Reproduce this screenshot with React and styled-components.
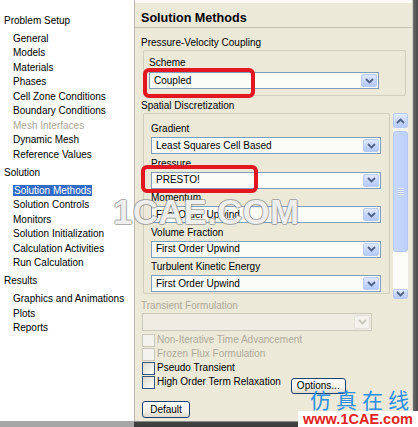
import React from 'react';
import styled, { createGlobalStyle } from 'styled-components';

const GlobalStyle = createGlobalStyle`
  html, body {
    margin: 0;
    padding: 0;
    background: #ffffff;
  }
  body {
    font-family: "Liberation Sans", Arial, sans-serif;
    font-size: 10px;
    color: #000;
  }
`;

const Window = styled.div`
  position: relative;
  width: 418px;
  height: 427px;
  display: flex;
  flex-direction: column;
  overflow: hidden;
  background: #ffffff;
`;

const Main = styled.div`
  display: flex;
  height: 421px;
`;

const Sidebar = styled.div`
  width: 134px;
  padding-top: 10px;
  border-right: 1px solid #b9b7ae;
  background: #ffffff;
  box-sizing: border-box;
  width: 135px;
`;

const TreeHeading = styled.div`
  line-height: 14.5px;
  margin: 3.5px 0;
  padding-left: 4px;
`;

const TreeItem = styled.div`
  line-height: 14.5px;
  padding-left: 13px;
  color: ${(p) => (p.$disabled ? '#aca899' : '#000')};
  white-space: nowrap;
`;

const Selected = styled.span`
  background: #316ac5;
  color: #ffffff;
  padding: 0 1px;
`;

const Panel = styled.div`
  flex: 1;
  background: #ece9d8;
  border-top: 3px solid #fbfaf6;
  padding-left: 6px;
  box-sizing: border-box;
`;

const EdgeShadow = styled.div`
  width: 6px;
  background: linear-gradient(to right, #d8d6cc 0, #d8d6cc 1px, #6a6a6a 1px, #4a4a4a 100%);
`;

const BottomBar = styled.div`
  height: 6px;
  background: linear-gradient(to bottom, #8a8a8a 0, #8a8a8a 1px, #454545 1px, #3a3a3a 100%);
  box-shadow: inset 134px 0 0 #a6a6a6;
`;

const Header = styled.div`
  height: 24px;
  box-sizing: border-box;
  margin-left: -6px;
  padding: 7px 0 0 6px;
  border-bottom: 1px solid #c5c2b2;
  font-size: 12.6px;
  font-weight: bold;
  line-height: 16px;
  height: 25px;
`;

const SectionTitle = styled.div`
  line-height: 14px;
  margin-top: ${(p) => p.$mt}px;
  color: ${(p) => (p.$disabled ? '#aca899' : '#000')};
`;

const GroupBox = styled.div`
  box-sizing: border-box;
  width: ${(p) => p.$w}px;
  height: ${(p) => (p.$h ? `${p.$h}px` : 'auto')};
  margin-left: 2px;
  border: 1px solid #d0cebf;
  border-radius: 2px;
  padding: ${(p) => p.$pad};
  overflow: hidden;
`;

const FieldLabel = styled.div`
  line-height: 14px;
  white-space: nowrap;
`;

const Field = styled.div`
  margin-bottom: 2.5px;
`;

const Combo = styled.div`
  box-sizing: border-box;
  width: 230px;
  height: ${(p) => (p.$h ? p.$h : 17)}px;
  margin-top: ${(p) => p.$mt}px;
  margin-left: ${(p) => p.$ml || 0}px;
  border: 1px solid ${(p) => (p.$disabled ? '#cac8bb' : '#7f9db9')};
  background: ${(p) => (p.$disabled ? '#efede3' : '#fbfbf7')};
  display: flex;
  align-items: center;
  padding: 1px;
`;

const ComboText = styled.div`
  flex: 1;
  padding-left: 3px;
  line-height: 14px;
  white-space: nowrap;
`;

const ArrowBtn = styled.div`
  box-sizing: border-box;
  width: 16px;
  height: 100%;
  border: 1px solid ${(p) => (p.$disabled ? '#e2e0d6' : '#b8cbf4')};
  border-radius: 2px;
  background: ${(p) =>
    p.$disabled
      ? '#f3f2ec'
      : 'linear-gradient(to bottom, #dfe8fc 0%, #c3d4fb 60%, #b4c9f8 100%)'};
  display: flex;
  align-items: center;
  justify-content: center;
`;

const SpatialRow = styled.div`
  display: flex;
  gap: 3px;
  align-items: flex-start;
`;

const Scrollbar = styled.div`
  width: 15px;
  height: 186px;
  display: flex;
  flex-direction: column;
  background: #f4f3ec;
`;

const ScrollBtn = styled.div`
  box-sizing: border-box;
  height: ${(p) => p.$h}px;
  border: 1px solid #b8cbf4;
  border-radius: 2px;
  background: linear-gradient(to bottom, #e3ebfd 0%, #c5d5fb 60%, #b6cbf8 100%);
  display: flex;
  align-items: center;
  justify-content: center;
  overflow: hidden;
`;

const Thumb = styled.div`
  box-sizing: border-box;
  height: 121px;
  margin-top: 3px;
  border: 1px solid #b3c7f3;
  border-radius: 3px;
  background: linear-gradient(to right, #c9d8fc 0%, #bccffb 100%);
  display: flex;
  align-items: center;
  justify-content: center;
`;

const Grip = styled.div`
  width: 6px;
  height: 7px;
  background: repeating-linear-gradient(to bottom, #eef3fe 0, #eef3fe 1px, #a9bff0 1px, #a9bff0 2px);
`;

const Track = styled.div`
  flex: 1;
  background: #fcfcf8;
`;

const CheckList = styled.div`
  margin-top: 2px;
`;

const CheckRow = styled.div`
  display: flex;
  align-items: flex-start;
  line-height: 14px;
  color: ${(p) => (p.$disabled ? '#aca899' : '#000')};
  white-space: nowrap;
`;

const CheckBox = styled.div`
  box-sizing: border-box;
  width: 13px;
  height: 13px;
  margin: 1px 2px 0 1px;
  border: 1px solid ${(p) => (p.$disabled ? '#cac8bb' : '#33567e')};
  background: ${(p) => (p.$disabled ? '#f4f3ee' : 'linear-gradient(135deg, #dcdad0 0%, #f8f7f2 80%)')};
`;

const Button = styled.div`
  box-sizing: border-box;
  height: ${(p) => p.$h}px;
  width: ${(p) => p.$w}px;
  margin-top: ${(p) => p.$mt}px;
  margin-left: ${(p) => p.$ml}px;
  border: 1px solid #1e3f6e;
  border-radius: 3px;
  background: linear-gradient(to bottom, #ffffff 0%, #f3f2ec 60%, #dedbcd 100%);
  display: flex;
  align-items: center;
  justify-content: center;
  line-height: 14px;
  color: #000;
`;

const RedBox = styled.div`
  position: absolute;
  left: ${(p) => p.$x}px;
  top: ${(p) => p.$y}px;
  width: ${(p) => p.$w}px;
  height: ${(p) => p.$h}px;
  box-sizing: border-box;
  border: 4px solid #e4161f;
  border-radius: 6px;
`;

const WaterMark = styled.div`
  position: absolute;
  left: 113px;
  top: 193px;
  font-family: "Liberation Sans", Arial, sans-serif;
  font-weight: bold;
  font-size: 35px;
  line-height: 38px;
  color: rgba(255, 255, 255, 0.88);
  text-shadow: 1px 0 0 rgba(120, 120, 120, 0.6), -1px 0 0 rgba(120, 120, 120, 0.6),
    0 1px 0 rgba(120, 120, 120, 0.6), 0 -1px 0 rgba(120, 120, 120, 0.6);
  letter-spacing: 0.2px;
`;

const Stamp = styled.div`
  position: absolute;
  right: 0;
  bottom: 0;
  width: 120px;
  display: flex;
  flex-direction: column;
  align-items: center;
`;

const StampCn = styled.div`
  font-family: "Noto Sans CJK SC", sans-serif;
  font-size: 21px;
  line-height: 24px;
  letter-spacing: 5px;
  color: #2b8fe6;
  margin-left: 8px;
`;

const StampUrl = styled.div`
  width: 100%;
  text-align: center;
  background: #ffffff;
  font-family: "Liberation Sans", Arial, sans-serif;
  font-weight: bold;
  font-size: 14.5px;
  line-height: 16px;
  color: #e2231a;
`;

const Chevron = ({ up, color = '#4d6185' }) => (
  <svg width="9" height="6" viewBox="0 0 9 6">
    <polyline
      points={up ? '1,5 4.5,1.5 8,5' : '1,1 4.5,4.5 8,1'}
      fill="none"
      stroke={color}
      strokeWidth="1.8"
    />
  </svg>
);

const Dropdown = ({ value, mt, ml, h, disabled }) => (
  <Combo $mt={mt} $ml={ml} $h={h} $disabled={disabled}>
    <ComboText>{value}</ComboText>
    <ArrowBtn $disabled={disabled}>
      <Chevron color={disabled ? '#c9c7bb' : '#4d6185'} />
    </ArrowBtn>
  </Combo>
);

const tree = [
  {
    title: 'Problem Setup',
    items: [
      'General',
      'Models',
      'Materials',
      'Phases',
      'Cell Zone Conditions',
      'Boundary Conditions',
      { label: 'Mesh Interfaces', disabled: true },
      'Dynamic Mesh',
      'Reference Values',
    ],
  },
  {
    title: 'Solution',
    items: [
      { label: 'Solution Methods', selected: true },
      'Solution Controls',
      'Monitors',
      'Solution Initialization',
      'Calculation Activities',
      'Run Calculation',
    ],
  },
  {
    title: 'Results',
    items: ['Graphics and Animations', 'Plots', 'Reports'],
  },
];

const spatial = [
  ['Gradient', 'Least Squares Cell Based'],
  ['Pressure', 'PRESTO!'],
  ['Momentum', 'First Order Upwind'],
  ['Volume Fraction', 'First Order Upwind'],
  ['Turbulent Kinetic Energy', 'First Order Upwind'],
];

const checks = [
  ['Non-Iterative Time Advancement', true],
  ['Frozen Flux Formulation', true],
  ['Pseudo Transient', false],
];

export default function App() {
  return (
    <>
      <GlobalStyle />
      <Window>
        <Main>
          <Sidebar>
            {tree.map((group) => (
              <div key={group.title}>
                <TreeHeading>{group.title}</TreeHeading>
                {group.items.map((it) => {
                  const item = typeof it === 'string' ? { label: it } : it;
                  return (
                    <TreeItem key={item.label} $disabled={item.disabled}>
                      {item.selected ? <Selected>{item.label}</Selected> : item.label}
                    </TreeItem>
                  );
                })}
              </div>
            ))}
          </Sidebar>

          <Panel>
            <Header>Solution Methods</Header>

            <SectionTitle $mt={8}>Pressure-Velocity Coupling</SectionTitle>
            <GroupBox $w={263} $pad="5px 0 6px 5px">
              <FieldLabel>Scheme</FieldLabel>
              <Dropdown value="Coupled" mt={2} />
            </GroupBox>

            <SectionTitle $mt={3}>Spatial Discretization</SectionTitle>
            <SpatialRow>
              <GroupBox $w={247} $h={181} $pad="8px 0 0 7px">
                {spatial.map(([label, value]) => (
                  <Field key={label}>
                    <FieldLabel>{label}</FieldLabel>
                    <Dropdown value={value} mt={1} />
                  </Field>
                ))}
              </GroupBox>
              <Scrollbar>
                <ScrollBtn $h={15}>
                  <Chevron up />
                </ScrollBtn>
                <Thumb>
                  <Grip />
                </Thumb>
                <Track />
                <ScrollBtn $h={10}>
                  <Chevron />
                </ScrollBtn>
              </Scrollbar>
            </SpatialRow>

            <SectionTitle $mt={0} $disabled>
              Transient Formulation
            </SectionTitle>
            <Dropdown value="" mt={0} ml={1} h={18} disabled />

            <CheckList>
              {checks.map(([label, disabled]) => (
                <CheckRow key={label} $disabled={disabled}>
                  <CheckBox $disabled={disabled} />
                  {label}
                </CheckRow>
              ))}
              <CheckRow>
                <CheckBox />
                High Order Term Relaxation
                <Button $w={55} $h={16} $mt={3} $ml={10}>
                  Options...
                </Button>
              </CheckRow>
            </CheckList>

            <Button $w={48} $h={17} $mt={7} $ml={1}>
              Default
            </Button>
          </Panel>

          <EdgeShadow />
        </Main>
        <BottomBar />

        <RedBox $x={143} $y={68} $w={112} $h={30} />
        <RedBox $x={141} $y={165} $w={117} $h={28} />

        <WaterMark>1CAE.COM</WaterMark>
        <Stamp>
          <StampCn>仿真在线</StampCn>
          <StampUrl>www.1CAE.com</StampUrl>
        </Stamp>
      </Window>
    </>
  );
}
